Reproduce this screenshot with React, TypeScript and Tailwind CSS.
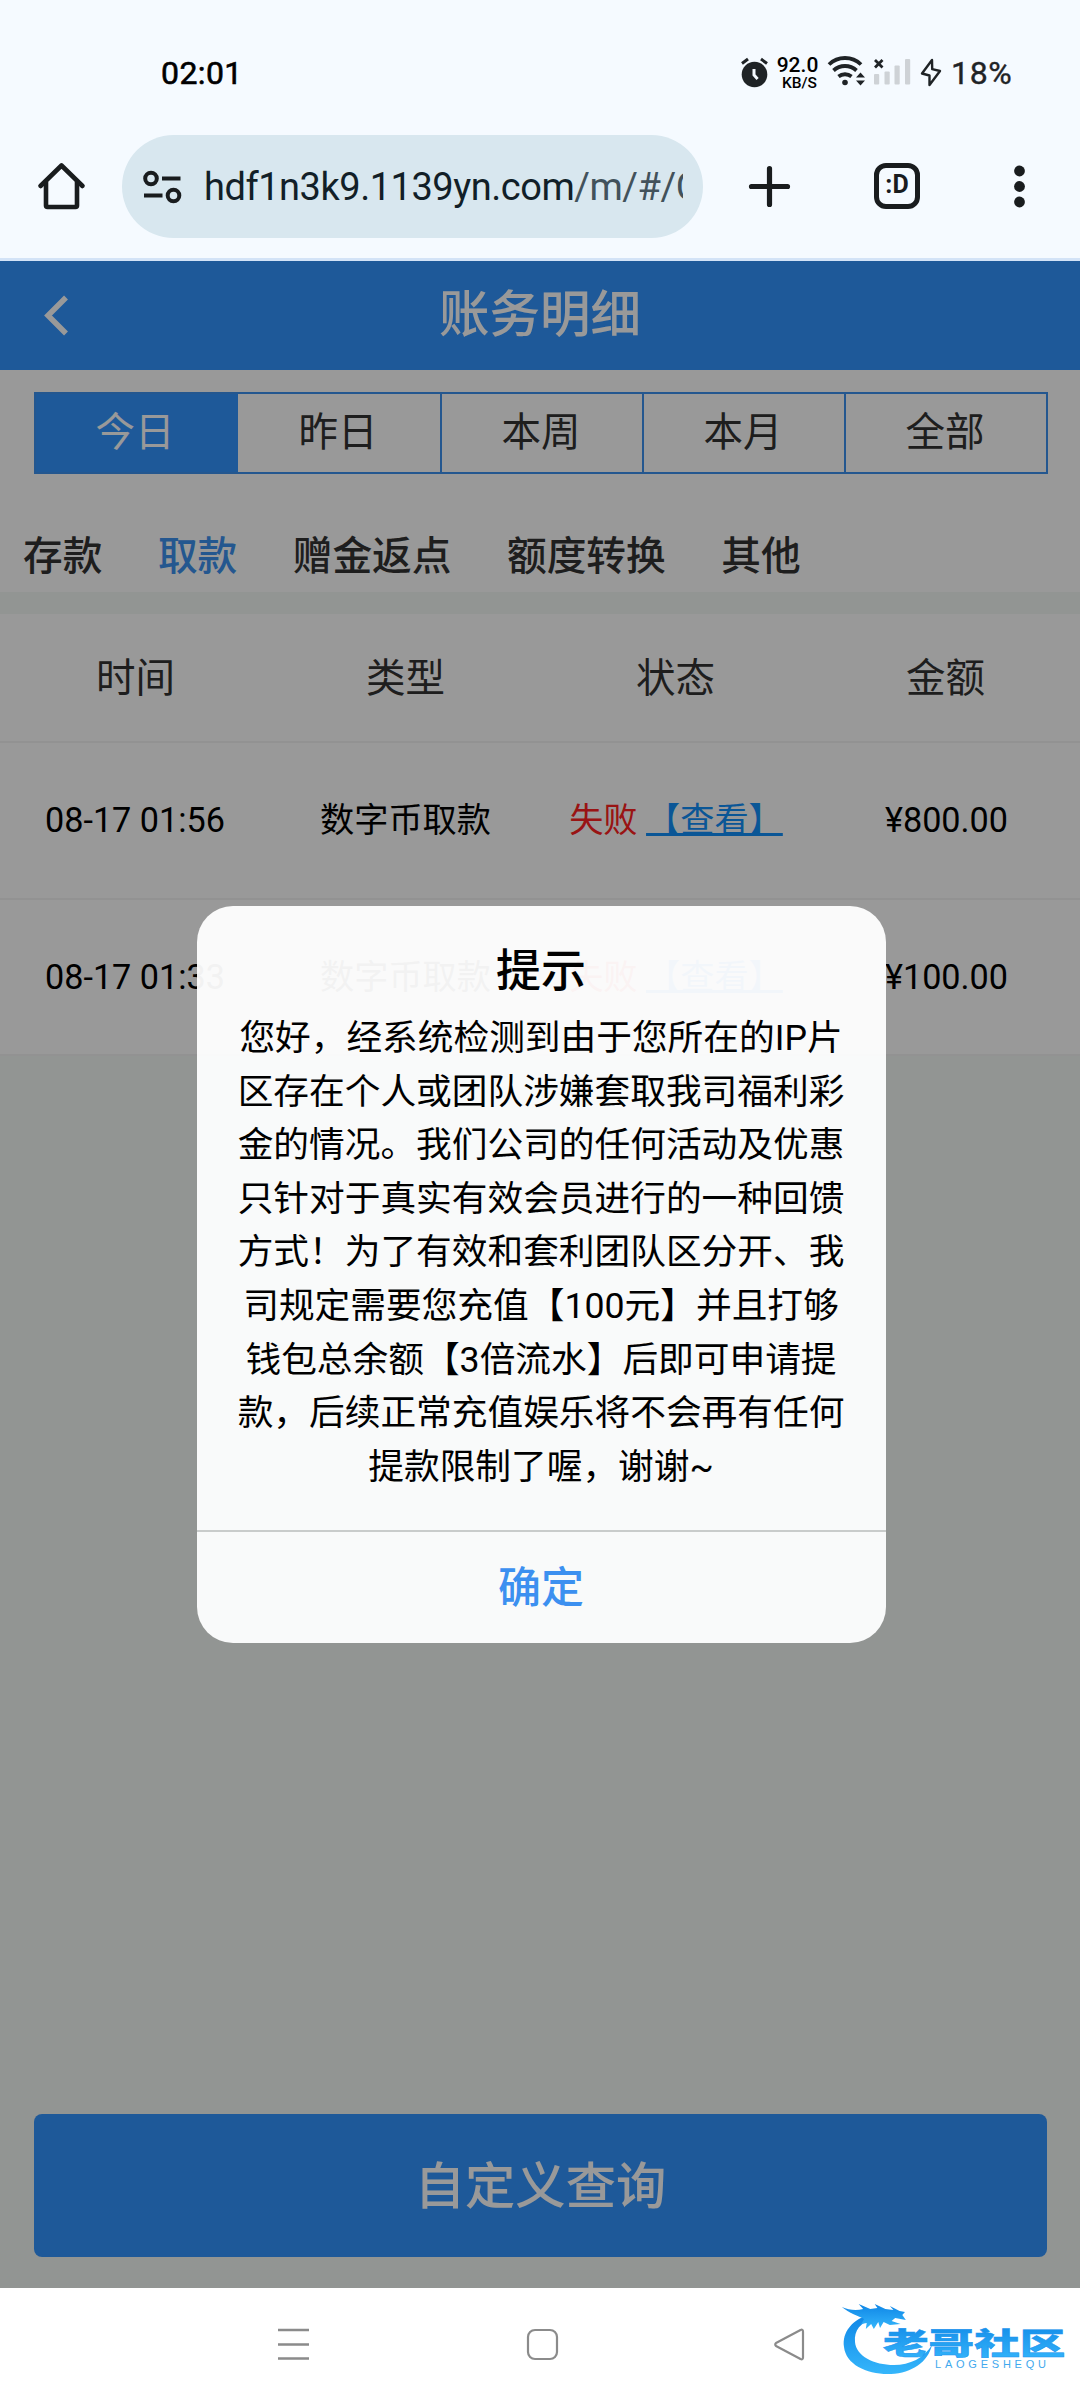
const ranges = ['今日', '昨日', '本周', '本月', '全部'];
const categories = ['存款', '取款', '赠金返点', '额度转换', '其他'];
const columns = ['时间', '类型', '状态', '金额'];

const records = [
  { time: '08-17 01:56', type: '数字币取款', status: '失败', amount: '¥800.00' },
  { time: '08-17 01:33', type: '数字币取款', status: '失败', amount: '¥100.00' },
];

const message = [
  '您好，经系统检测到由于您所在的IP片',
  '区存在个人或团队涉嫌套取我司福利彩',
  '金的情况。我们公司的任何活动及优惠',
  '只针对于真实有效会员进行的一种回馈',
  '方式！为了有效和套利团队区分开、我',
  '司规定需要您充值【100元】并且打够',
  '钱包总余额【3倍流水】后即可申请提',
  '款，后续正常充值娱乐将不会再有任何',
  '提款限制了喔，谢谢~',
];

function StatusBar() {
  return (
    <div className="flex h-[135px] items-start pt-[55px] pl-[161px]">
      <span className="w-[579px] text-[32px] leading-[37px] tracking-[0.4px] text-black [-webkit-text-stroke:0.6px_black]">02:01</span>
      <svg className="h-9 w-[30px]" viewBox="0 0 30 36" fill="none">
        <circle cx="14.5" cy="19.5" r="12.8" fill="#1f2326" />
        <path d="M2 8.5 8 4M27 8.5 21 4" stroke="#1f2326" strokeWidth="3" />
        <path d="M14 14v6l3.6 4" stroke="#f5faff" strokeWidth="3" />
      </svg>
      <div className="ml-[6px] flex w-[43px] flex-col items-center font-medium text-black">
        <span className="text-[21px] leading-[20px]">92.0</span>
        <span className="pl-1 text-[15.5px] leading-[16px]">KB/S</span>
      </div>
      <svg className="ml-[8px] h-9 w-[40px]" viewBox="0 0 40 36" fill="none" stroke="#1f2326" strokeWidth="3.8">
        <path d="M2 9.5a23 23 0 0 1 32 0" />
        <path d="M6.5 15.5a17 17 0 0 1 23 0" />
        <path d="M11.5 21.5a10.5 10.5 0 0 1 13 0" />
        <circle cx="18" cy="27.5" r="2.8" fill="#1f2326" stroke="none" />
        <path d="m33.5 17.5 4.5 5h-9zM33.5 30.5l4.5-5h-9z" fill="#1f2326" stroke="none" />
      </svg>
      <svg className="ml-[7px] h-9 w-[38px]" viewBox="0 0 38 36" fill="none">
        <g fill="#ced2d6">
          <rect y="19" width="5.2" height="10.5" rx="1" />
          <rect x="10.5" y="16.5" width="5.2" height="13" rx="1" />
          <rect x="20.5" y="10.5" width="5.2" height="19" rx="1" />
          <rect x="31" y="4" width="5.2" height="25.5" rx="1" />
        </g>
        <path d="m1 5 7.5 7.5M8.5 5 1 12.5" stroke="#1f2326" strokeWidth="2.8" />
      </svg>
      <svg className="ml-2 h-9 w-[22px]" viewBox="0 0 22 36" fill="none" stroke="#1f2326" strokeWidth="2.4" strokeLinejoin="round">
        <path d="M12 5 2 18.5l7.5 2L9.5 30 20 16l-7.8-1.8z" />
      </svg>
      <span className="ml-[9px] text-[32px] leading-[37px] tracking-[0.7px] text-[#1f2326] [-webkit-text-stroke:0.4px_#1f2326]">18%</span>
    </div>
  );
}

function BrowserBar() {
  return (
    <div className="flex h-[126px] items-start border-b-[3px] border-[#d3e3f7]">
      <svg className="mt-[25px] ml-[36px] h-[52px] w-[51px]" viewBox="0 0 51 52" fill="none" stroke="#191c1e" strokeWidth="4.6" strokeLinecap="round" strokeLinejoin="round">
        <path d="M4.5 26 25.5 5.5 46.5 26" />
        <path d="M10 22v23.5q0 1.5 1.5 1.5h28q1.5 0 1.5-1.5V22" />
      </svg>
      <div className="ml-[35px] flex h-[103px] w-[581px] items-center rounded-full bg-[#d8e7ef] pl-[20px]">
        <svg className="h-[34px] w-[40px]" viewBox="0 0 40 34" fill="none" stroke="#191c1e" strokeWidth="4">
          <circle cx="9" cy="8.5" r="5.8" />
          <path d="M20 8.5h18.5M2 25.5h18.5" />
          <circle cx="31.5" cy="25.5" r="5.8" />
        </svg>
        <div className="ml-[22px] w-[479px] overflow-hidden text-[38px] leading-[48px] tracking-[-0.47px] whitespace-nowrap text-[#121f28]">
          hdf1n3k9.1139yn.com<span className="text-[#42525b]">/m/#/C</span>
        </div>
      </div>
      <svg className="mt-[28px] ml-[43px] h-[46px] w-[46px]" viewBox="0 0 46 46" stroke="#191c1e" strokeWidth="5.2" strokeLinecap="round">
        <path d="M23.5 5.5v36M5.5 23.5h36" />
      </svg>
      <div className="mt-[28px] ml-[82px] flex h-[46px] w-[46px] items-center justify-center rounded-[12px] border-5 border-[#191c1e] pb-1 text-[25px] leading-none font-bold text-[#191c1e]">
        :D
      </div>
      <svg className="mt-[28px] ml-[89px] h-[46px] w-[20px]" viewBox="0 0 20 46" fill="#191c1e">
        <circle cx="10.5" cy="8" r="5.4" />
        <circle cx="10.5" cy="23.5" r="5.4" />
        <circle cx="10.5" cy="39" r="5.4" />
      </svg>
    </div>
  );
}

function Records() {
  return (
    <div className="flex h-[2027px] flex-col bg-[#f4f8f5]">
      <header className="flex h-[109px] items-center bg-[#3294ff] text-white">
        <svg className="mb-0.5 ml-[42px] h-[44px] w-[30px]" viewBox="0 0 30 44" fill="none" stroke="currentColor" strokeWidth="5.5">
          <path d="M24 4.5 6 22.5l18 18" />
        </svg>
        <h1 className="mr-[72px] flex-1 text-center text-[50.5px] leading-none font-medium">账务明细</h1>
      </header>

      <div className="h-[222px] bg-white pt-[22px] pr-[32px] pl-[34px]">
        <div className="grid h-[82px] grid-cols-5 border-2 border-[#3d91ee]">
          {ranges.map((r, i) => (
            <button
              key={r}
              className={
                i === 0
                  ? 'bg-[#3294ff] pr-1 text-[39.5px] text-white'
                  : 'border-l-2 border-[#3d91ee] pr-0.5 text-[39.5px] text-[#333] [&:nth-child(2)]:border-l-0'
              }
            >
              {r}
            </button>
          ))}
        </div>
        <div className="-ml-[11px] flex gap-[55.5px] pt-[53px]">
          {categories.map((c, i) => (
            <span key={c} className={`text-[39.7px] leading-[60px] font-medium ${i === 1 ? 'text-[#3d91ee]' : 'text-[#333]'}`}>
              {c}
            </span>
          ))}
        </div>
      </div>

      <div className="mt-[22px] grid h-[129px] grid-cols-4 border-b-2 border-[#f3f3f3] bg-white">
        {columns.map((c) => (
          <span key={c} className="pl-px text-center text-[39.5px] leading-[130px] text-[#333]">
            {c}
          </span>
        ))}
      </div>
      {records.map((r) => (
        <div
          key={r.time}
          className="grid h-[156.5px] grid-cols-4 border-b-2 border-[#f3f3f3] bg-white text-center text-[34.2px] leading-[155px] text-black"
        >
          <span>{r.time}</span>
          <span className="pl-px">{r.type}</span>
          <span className="pl-0.5 whitespace-nowrap">
            <span className="text-[#ff2222]">{r.status}</span>{' '}
            <a className="text-[#128ffa] underline decoration-[3px] underline-offset-[1px] [text-decoration-skip-ink:none]">【查看】</a>
          </span>
          <span className="pl-[3px]">{r.amount}</span>
        </div>
      ))}

      <button className="mt-auto mr-[33px] mb-[31px] ml-[34px] h-[143px] rounded-lg bg-[#3294ff] pt-0.5 text-[50.3px] font-medium text-white">
        自定义查询
      </button>
    </div>
  );
}

function AlertDialog() {
  return (
    <div className="absolute inset-0 flex items-start justify-center bg-black/40 pt-[645px]">
      <div className="ml-[2px] flex h-[737px] w-[689px] flex-col rounded-[36px] bg-white/95 text-center text-black">
        <h2 className="mt-[36px] text-[45px] leading-[60px] font-medium">提示</h2>
        <div className="mt-[10px] flex-1 text-[35.7px] leading-[53.6px] whitespace-nowrap">
          {message.map((line) => (
            <p key={line}>{line}</p>
          ))}
        </div>
        <button className="h-[113px] border-t-2 border-[#c9cccb] pt-0.5 text-[43px] font-medium text-[#3c90f0]">确定</button>
      </div>
    </div>
  );
}

function Watermark() {
  return (
    <svg className="absolute top-[8px] right-[8px] h-[80px] w-[232px]" viewBox="0 0 232 80">
      <defs>
        <linearGradient id="wm" x1="0" y1="0" x2="0" y2="1">
          <stop offset="0" stopColor="#0f86e6" />
          <stop offset="1" stopColor="#35b6fb" />
        </linearGradient>
      </defs>
      <g fill="url(#wm)">
        <path d="M30 18C12 24 2 36 4 51c2 18 24 28 47 27 21-1 37-12 41-29-8 13-22 20-38 20-20 0-38-9-39-23-1-12 5-19 20-25z" />
        <path
          transform="scale(0.890 1)"
          d="M2 11c8 3 16 4 24 2l-5-5 13 5 8-1-3-4 12 5 9 1-4-4 11 5 6 1-3 3 4 5-12-2-4 3 10 3-12 1-7-3-4 6-2-6-5 7-3-5-6 5 1-6-6 1 3-5C21 20 10 17 2 11z"
        />
      </g>
      <g transform="translate(43 57.5) scale(1.52 1)">
        <text fontSize="30" fontWeight="900" fill="url(#wm)" stroke="#2093ee" strokeWidth="0.5" className="font-['Noto_Sans_CJK_SC',sans-serif]">
          老哥社区
        </text>
      </g>
      <text x="95" y="71.5" textLength="111" fontSize="11" fill="#3fa9ee" className="font-['Liberation_Sans',sans-serif]">
        LAOGESHEQU
      </text>
    </svg>
  );
}

function SystemNav() {
  return (
    <div className="relative flex h-[112px] items-center bg-white pl-[276px]">
      <svg className="h-[36px] w-[36px]" viewBox="0 0 36 36" stroke="#8b8b8b" strokeWidth="2.6">
        <path d="M2 4h31M2 18.5h31M2 32.5h31" />
      </svg>
      <svg className="ml-[212px] h-[36px] w-[36px]" viewBox="0 0 36 36" fill="none" stroke="#8b8b8b" strokeWidth="2.2">
        <rect x="4" y="4" width="29" height="29" rx="7" />
      </svg>
      <svg className="ml-[211px] h-[36px] w-[36px]" viewBox="0 0 36 36" fill="none" stroke="#8b8b8b" strokeWidth="2.2" strokeLinejoin="round">
        <path d="M5 17q-1.5 1.5 0 3l24.5 13q2.5 1 2.5-1.5V5.5q0-2.5-2.5-1.5z" />
      </svg>
      <Watermark />
    </div>
  );
}

export default function App() {
  return (
    <div className="flex h-[2400px] w-[1080px] flex-col overflow-hidden bg-[#f5faff] font-[Roboto,'Noto_Sans_CJK_SC',sans-serif]">
      <StatusBar />
      <BrowserBar />
      <div className="relative">
        <Records />
        <AlertDialog />
      </div>
      <SystemNav />
    </div>
  );
}
